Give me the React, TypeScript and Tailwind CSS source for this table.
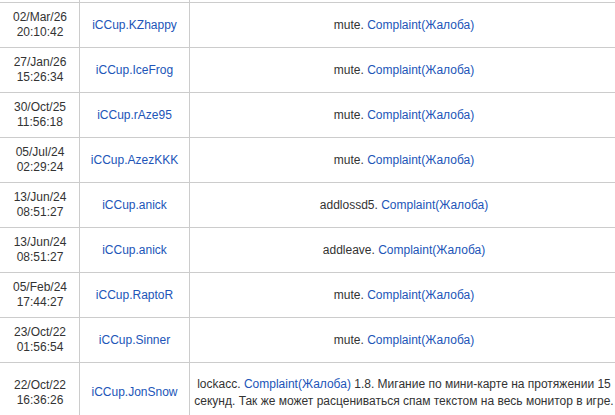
import React from "react";

const rows = [
  { d: "02/Mar/26", t: "20:10:42", u: "iCCup.KZhappy", a: "mute." },
  { d: "27/Jan/26", t: "15:26:34", u: "iCCup.IceFrog", a: "mute." },
  { d: "30/Oct/25", t: "11:56:18", u: "iCCup.rAze95", a: "mute." },
  { d: "05/Jul/24", t: "02:29:24", u: "iCCup.AzezKKK", a: "mute." },
  { d: "13/Jun/24", t: "08:51:27", u: "iCCup.anick", a: "addlossd5." },
  { d: "13/Jun/24", t: "08:51:27", u: "iCCup.anick", a: "addleave." },
  { d: "05/Feb/24", t: "17:44:27", u: "iCCup.RaptoR", a: "mute." },
  { d: "23/Oct/22", t: "01:56:54", u: "iCCup.Sinner", a: "mute." },
];

export default function App() {
  return (
    <div
      className="w-[615px] h-[415px] overflow-hidden bg-white text-[12px] leading-[15px] text-[#333]"
      style={{ fontFamily: '"Liberation Sans", Arial, sans-serif' }}
    >
      <div className="w-[618px]">
        <div className="grid grid-cols-[80px_110px_1fr] h-[2px]">
          <div className="border-r border-[#ccc]" />
          <div className="border-r border-[#ccc]" />
          <div />
        </div>
        {rows.map((r, i) => (
          <div
            key={i}
            className="grid grid-cols-[80px_110px_1fr] h-[45px] border-t border-[#ccc]"
          >
            <div className="border-r border-[#ccc] flex flex-col items-center justify-center pl-[1px]">
              <span>{r.d}</span>
              <span>{r.t}</span>
            </div>
            <div className="border-r border-[#ccc] flex items-center justify-center text-[#2155b8]">
              {r.u}
            </div>
            <div className="flex items-center justify-center px-1 text-center">
              <span>
                {r.a} <span className="text-[#2155b8]">Complaint(Жалоба)</span>
              </span>
            </div>
          </div>
        ))}
        <div className="grid grid-cols-[80px_110px_1fr] h-[60px] border-t border-[#ccc]">
          <div className="border-r border-[#ccc] flex flex-col items-center justify-center pl-[1px]">
            <span>22/Oct/22</span>
            <span>16:36:26</span>
          </div>
          <div className="border-r border-[#ccc] flex items-center justify-center text-[#2155b8]">
            iCCup.JonSnow
          </div>
          <div className="flex items-center justify-center px-1 text-center leading-[17px]">
            <span>
              lockacc. <span className="text-[#2155b8]">Complaint(Жалоба)</span> 1.8. Мигание по
              мини-карте на протяжении 15 секунд. Так же может расцениваться спам текстом на весь
              монитор в игре.
            </span>
          </div>
        </div>
      </div>
    </div>
  );
}
